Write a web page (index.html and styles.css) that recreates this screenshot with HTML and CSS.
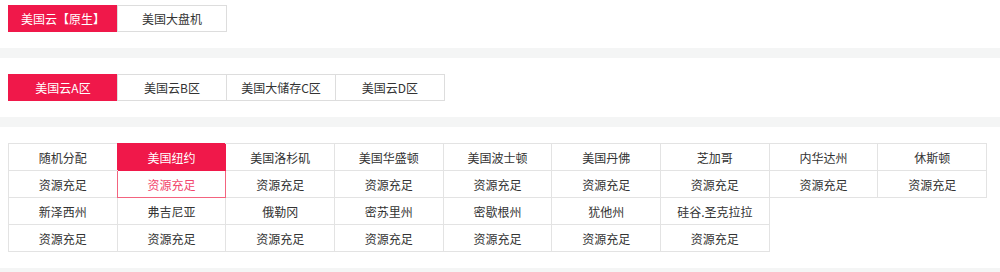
FILE: index.html
```html
<!DOCTYPE html>
<html lang="zh-CN">
<head>
    <meta charset="UTF-8">
    <meta name="viewport" content="width=device-width, initial-scale=1.0">
    <title>选择区域</title>
    <link rel="stylesheet" href="styles.css">
</head>
<body>
    <div class="section section-top">
        <div class="tabs">
            <div class="tab active">美国云【原生】</div>
            <div class="tab">美国大盘机</div>
        </div>
    </div>
    <div class="divider"></div>

    <div class="section">
        <div class="tabs">
            <div class="tab active">美国云A区</div>
            <div class="tab">美国云B区</div>
            <div class="tab">美国大储存C区</div>
            <div class="tab">美国云D区</div>
        </div>
    </div>
    <div class="divider"></div>

    <div class="section">
        <div class="region-grid">
            <div class="cell">随机分配</div>
            <div class="cell selected">美国纽约</div>
            <div class="cell">美国洛杉矶</div>
            <div class="cell">美国华盛顿</div>
            <div class="cell">美国波士顿</div>
            <div class="cell">美国丹佛</div>
            <div class="cell">芝加哥</div>
            <div class="cell">内华达州</div>
            <div class="cell">休斯顿</div>

            <div class="cell">资源充足</div>
            <div class="cell status-selected">资源充足</div>
            <div class="cell">资源充足</div>
            <div class="cell">资源充足</div>
            <div class="cell">资源充足</div>
            <div class="cell">资源充足</div>
            <div class="cell">资源充足</div>
            <div class="cell">资源充足</div>
            <div class="cell">资源充足</div>

            <div class="cell">新泽西州</div>
            <div class="cell">弗吉尼亚</div>
            <div class="cell">俄勒冈</div>
            <div class="cell">密苏里州</div>
            <div class="cell">密歇根州</div>
            <div class="cell">犹他州</div>
            <div class="cell">硅谷.圣克拉拉</div>
            <div class="empty"></div>
            <div class="empty"></div>

            <div class="cell">资源充足</div>
            <div class="cell">资源充足</div>
            <div class="cell">资源充足</div>
            <div class="cell">资源充足</div>
            <div class="cell">资源充足</div>
            <div class="cell">资源充足</div>
            <div class="cell">资源充足</div>
        </div>
    </div>
    <div class="divider"></div>
</body>
</html>
```

FILE: styles.css
```css
body {
    margin: 0;
    padding: 0;
    font-family: "Noto Sans CJK SC", "Noto Sans", sans-serif;
    font-size: 12px;
    color: #333;
    background: #fff;
}

.section {
    padding: 16px 12px 16px 8px;
}

.section-top {
    padding-top: 5px;
}

.divider {
    height: 10px;
    background-color: #f4f5f5;
}

.tabs {
    display: flex;
}

.tab {
    box-sizing: border-box;
    width: 110px;
    height: 27px;
    line-height: 25px;
    text-align: center;
    border: 1px solid #dddddd;
    margin-left: -1px;
    color: #333;
}

.tab:first-child {
    margin-left: 0;
}

.tab.active {
    background-color: #f0184a;
    border-color: #f0184a;
    color: #fff;
}

.region-grid {
    display: grid;
    grid-template-columns: repeat(9, 1fr);
    width: 979px;
    box-sizing: border-box;
    border-top: 1px solid #e3e3e3;
    border-left: 1px solid #e3e3e3;
}

.cell {
    height: 27px;
    line-height: 27px;
    box-sizing: border-box;
    text-align: center;
    border-right: 1px solid #e3e3e3;
    border-bottom: 1px solid #e3e3e3;
    white-space: nowrap;
}

.cell.selected {
    background-color: #f0184a;
    border-color: #f0184a;
    color: #fff;
    box-shadow: -1px -1px 0 0 #f0184a;
}

.cell.status-selected {
    color: #f2456d;
    border-color: #f3647f;
    box-shadow: -1px 0 0 0 #f3647f;
}
```
